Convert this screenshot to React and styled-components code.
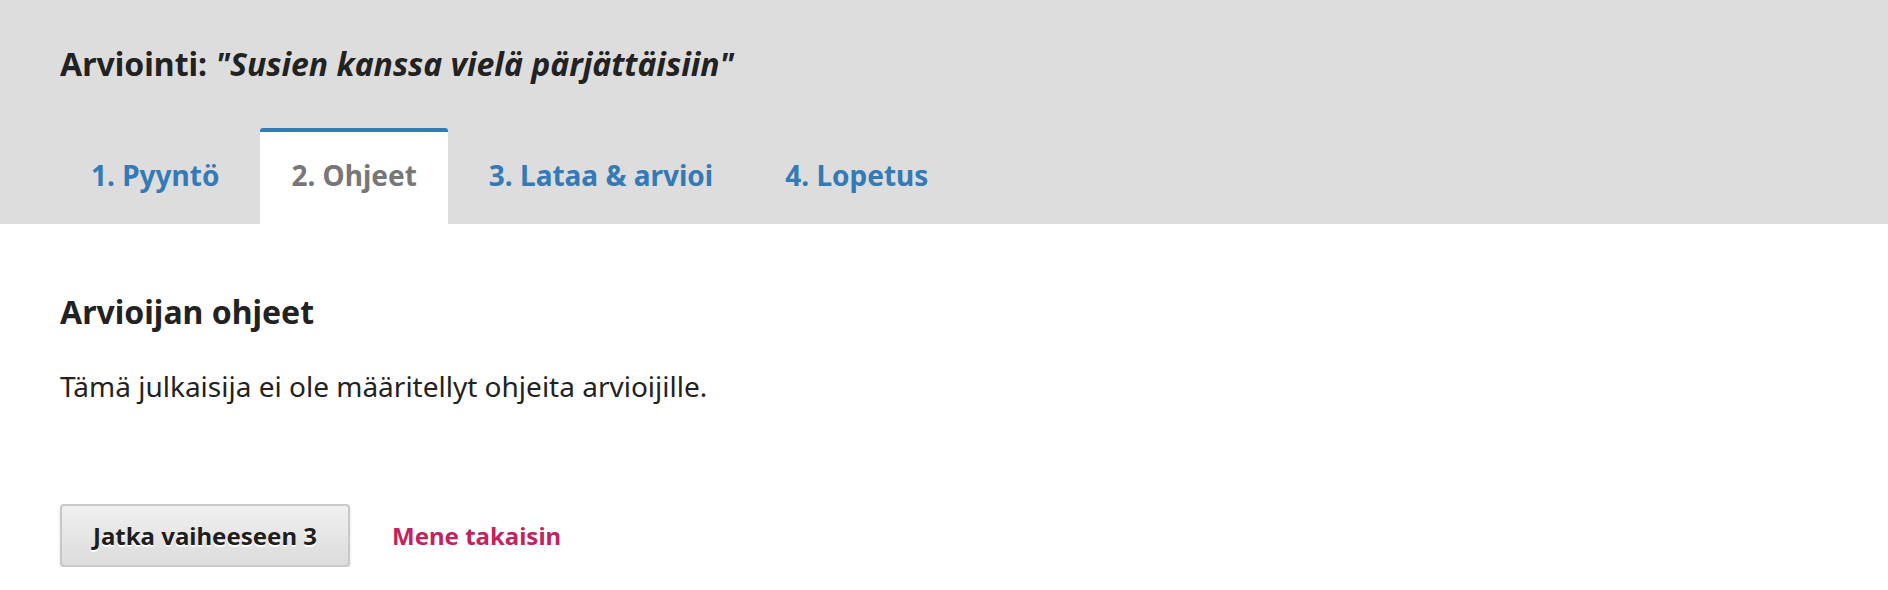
import styled, { createGlobalStyle } from "styled-components";

const GlobalStyle = createGlobalStyle`
  body {
    margin: 0;
    background: #ffffff;
    font-family: "Noto Sans", "Open Sans", sans-serif;
    color: #222222;
  }
`;

const Header = styled.div`
  background: #dddddd;
  padding: 0 60px;
  height: 224px;
  display: flex;
  flex-direction: column;
  justify-content: space-between;
`;

const Title = styled.h1`
  margin: 0;
  padding-top: 44px;
  font-size: 32px;
  font-weight: 700;
  line-height: 40px;
  color: #222222;

  em {
    font-style: italic;
  }
`;

const Tabs = styled.ul`
  list-style: none;
  margin: 0;
  padding: 0;
  display: flex;
  gap: 10px;
`;

const Tab = styled.li`
  padding: 0 31px 7px;
  height: 96px;
  display: flex;
  align-items: center;
  box-sizing: border-box;
  font-size: 28px;
  font-weight: 700;
  color: ${(p) => (p.$active ? "#777777" : "#337ab7")};
  background: ${(p) => (p.$active ? "#ffffff" : "transparent")};
  border-top: 4px solid ${(p) => (p.$active ? "#337ab7" : "transparent")};
  border-radius: 3px 3px 0 0;
`;

const Content = styled.div`
  padding: 68px 60px 0;
`;

const Heading = styled.h2`
  margin: 0;
  font-size: 32px;
  font-weight: 700;
  line-height: 40px;
`;

const Text = styled.p`
  margin: 36px 0 0;
  font-size: 28px;
  line-height: 36px;
`;

const Actions = styled.div`
  display: flex;
  align-items: center;
  gap: 42px;
  margin-top: 100px;
`;

const Button = styled.button`
  height: 63px;
  padding: 0 31px;
  font-family: inherit;
  font-size: 24px;
  font-weight: 700;
  color: #1e1e1e;
  background: linear-gradient(#f0f0f0, #dcdcdc);
  border: 2px solid #c8c8c8;
  border-radius: 4px;
  box-shadow: 0 2px 3px rgba(0, 0, 0, 0.12);
  text-shadow: 0 2px 0 #ffffff;
`;

const BackLink = styled.a`
  font-size: 24px;
  font-weight: 700;
  color: #c2235f;
  text-decoration: none;
`;

export default function App() {
  return (
    <>
      <GlobalStyle />
      <Header>
        <Title>
          Arviointi: <em>"Susien kanssa vielä pärjättäisiin"</em>
        </Title>
        <Tabs>
          <Tab>1. Pyyntö</Tab>
          <Tab $active>2. Ohjeet</Tab>
          <Tab>3. Lataa &amp; arvioi</Tab>
          <Tab>4. Lopetus</Tab>
        </Tabs>
      </Header>
      <Content>
        <Heading>Arvioijan ohjeet</Heading>
        <Text>Tämä julkaisija ei ole määritellyt ohjeita arvioijille.</Text>
        <Actions>
          <Button>Jatka vaiheeseen 3</Button>
          <BackLink href="#">Mene takaisin</BackLink>
        </Actions>
      </Content>
    </>
  );
}
